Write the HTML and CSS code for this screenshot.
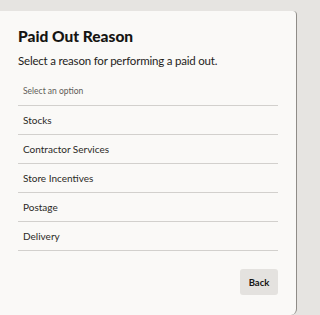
FILE: index.html
```html
<!DOCTYPE html>
<html>
<head>
<meta charset="utf-8">
<link rel="stylesheet" href="styles.css">
</head>
<body>
<div class="dialog">
  <h1 class="title">Paid Out Reason</h1>
  <p class="subtitle">Select a reason for performing a paid out.</p>
  <div class="placeholder">Select an option</div>
  <ul class="options">
    <li>Stocks</li>
    <li>Contractor Services</li>
    <li>Store Incentives</li>
    <li>Postage</li>
    <li>Delivery</li>
  </ul>
  <div class="footer">
    <button class="back">Back</button>
  </div>
</div>
</body>
</html>
```
FILE: styles.css
```css
html, body {
  margin: 0;
  padding: 0;
}
body {
  background: #e6e4e1;
  width: 299px;
  height: 315px;
  overflow: hidden;
  font-family: Lato, "Noto Sans", sans-serif;
  color: #1f1d1b;
  display: flex;
  align-items: flex-start;
}
.dialog {
  margin-top: 11px;
  width: 297px;
  height: 304px;
  box-sizing: border-box;
  background: #faf9f7;
  border-radius: 0 4px 6px 0;
  border-right: 1px solid #8f8c88;
  padding: 0 18px 0 18px;
  display: flex;
  flex-direction: column;
}
.title {
  margin: 15px 0 0;
  font-size: 15.5px;
  font-weight: 900;
  line-height: 20px;
  color: #161513;
}
.subtitle {
  margin: 6px 0 0;
  font-size: 11.5px;
  letter-spacing: -0.2px;
  line-height: 18px;
  color: #1f1d1b;
}
.placeholder {
  margin-top: 11px;
  height: 24px;
  line-height: 21px;
  padding-left: 5px;
  font-size: 8.5px;
  color: #5f5c58;
  border-bottom: 1px solid #d2d0cd;
}
.options {
  list-style: none;
  margin: 0;
  padding: 0;
}
.options li {
  height: 28px;
  line-height: 28px;
  padding-left: 5px;
  font-size: 10px;
  color: #2b2926;
  border-bottom: 1px solid #d2d0cd;
}
.footer {
  display: flex;
  justify-content: flex-end;
  margin-top: 18px;
}
.back {
  width: 38px;
  height: 26px;
  border: none;
  border-radius: 3px;
  background: #e4e2df;
  font-family: Lato, "Noto Sans", sans-serif;
  font-size: 9.5px;
  font-weight: 700;
  color: #161513;
  padding: 0;
}
```
